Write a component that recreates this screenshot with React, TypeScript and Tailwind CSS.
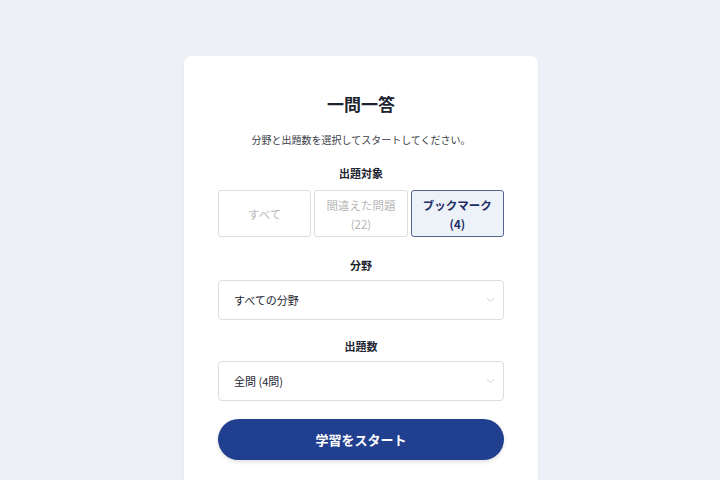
import React from "react";

const Chevron = () => (
  <svg width="9" height="6" viewBox="0 0 9 6" fill="none" className="absolute right-[8px] top-1/2 -translate-y-1/2">
    <path d="M1 1.2 L4.5 4.6 L8 1.2" stroke="#c9ccd2" strokeWidth="0.9" />
  </svg>
);

export default function App() {
  return (
    <div
      className="w-[720px] h-[480px] overflow-hidden bg-[#edf1f7] flex justify-center"
      style={{ fontFamily: '"Noto Sans CJK JP", "Noto Sans", sans-serif' }}
    >
      <div className="mt-[56px] ml-[2px] w-[354px] h-[460px] bg-white rounded-[7px] shadow-[0_1px_3px_rgba(0,0,0,0.06)] px-[34px] pt-[34px] flex flex-col shrink-0">
        <h1 className="text-center text-[17px] leading-[28px] font-bold text-[#1c2430]">一問一答</h1>
        <p className="mt-[14px] text-center text-[10px] leading-[16px] text-[#3a4048]">
          分野と出題数を選択してスタートしてください。
        </p>
        <div className="mt-[16px] text-center text-[11px] leading-[18px] font-bold text-[#1c2430]">出題対象</div>
        <div className="mt-[8px] grid grid-cols-3 gap-[3px]">
          <div className="h-[47px] pt-[3px] border border-[#dcdde0] rounded-[3px] flex items-center justify-center text-[11.5px] text-[#b8b8b8]">
            すべて
          </div>
          <div className="h-[47px] pt-[3px] border border-[#dcdde0] rounded-[3px] flex flex-col items-center justify-center text-[11.5px] leading-[19px] text-[#b8b8b8]">
            <span>間違えた問題</span>
            <span>(22)</span>
          </div>
          <div className="h-[47px] pt-[3px] border border-[#56628e] rounded-[3px] bg-[#edf1f8] flex flex-col items-center justify-center text-[11.5px] leading-[19px] font-bold text-[#1f2d66]">
            <span>ブックマーク</span>
            <span>(4)</span>
          </div>
        </div>
        <div className="mt-[19px] text-center text-[11px] leading-[18px] font-bold text-[#1c2430]">分野</div>
        <div className="mt-[6px] relative h-[40px] border border-[#dcdde0] rounded-[4px] flex items-center pl-[15px] text-[11px] text-[#1c2430]">
          すべての分野
          <Chevron />
        </div>
        <div className="mt-[17px] text-center text-[11px] leading-[18px] font-bold text-[#1c2430]">出題数</div>
        <div className="mt-[6px] relative h-[40px] border border-[#dcdde0] rounded-[4px] flex items-center pl-[15px] text-[11px] text-[#1c2430]">
          全問 (4問)
          <Chevron />
        </div>
        <button className="mt-[18px] h-[41px] rounded-full bg-[#213f8f] text-white text-[13px] font-bold shadow-[0_2px_4px_rgba(0,0,0,0.12)]">
          学習をスタート
        </button>
      </div>
    </div>
  );
}
